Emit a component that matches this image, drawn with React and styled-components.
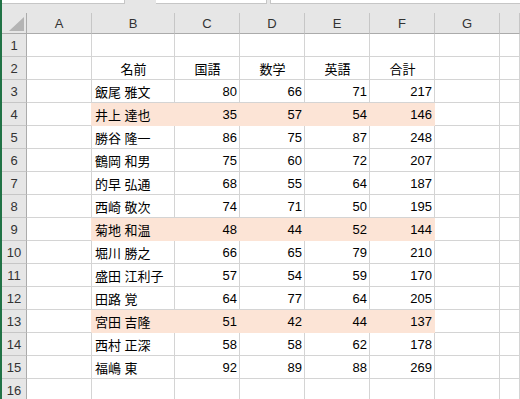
import React from "react";
import styled, { createGlobalStyle } from "styled-components";

const GlobalStyle = createGlobalStyle`
  html, body {
    margin: 0;
    padding: 0;
    width: 520px;
    height: 399px;
    overflow: hidden;
    background: #ffffff;
  }
  body {
    font-family: "Liberation Sans", "Noto Sans CJK JP", sans-serif;
  }
`;

const HILITE = "#fce4d6";
const GRID = "#d4d4d4";

const columns = ["A", "B", "C", "D", "E", "F", "G", ""];

const students = [
  { name: "飯尾 雅文", scores: [80, 66, 71] },
  { name: "井上 達也", scores: [35, 57, 54], mark: true },
  { name: "勝谷 隆一", scores: [86, 75, 87] },
  { name: "鶴岡 和男", scores: [75, 60, 72] },
  { name: "的早 弘通", scores: [68, 55, 64] },
  { name: "西崎 敬次", scores: [74, 71, 50] },
  { name: "菊地 和温", scores: [48, 44, 52], mark: true },
  { name: "堀川 勝之", scores: [66, 65, 79] },
  { name: "盛田 江利子", scores: [57, 54, 59] },
  { name: "田路 覚", scores: [64, 77, 64] },
  { name: "宮田 吉隆", scores: [51, 42, 44], mark: true },
  { name: "西村 正深", scores: [58, 58, 62] },
  { name: "福嶋 東", scores: [92, 89, 88] },
];

const App = () => {
  const rows = [];
  // row 1: empty, row 2: headings, rows 3..15: data, row 16: empty
  rows.push({ cells: ["", "", "", "", "", "", "", ""] });
  rows.push({
    cells: ["", "名前", "国語", "数学", "英語", "合計", "", ""],
    heading: true,
  });
  students.forEach((s) => {
    const total = s.scores.reduce((a, b) => a + b, 0);
    rows.push({
      cells: ["", s.name, ...s.scores, total, "", ""],
      mark: s.mark,
    });
  });
  rows.push({ cells: ["", "", "", "", "", "", "", ""] });

  return (
    <>
      <GlobalStyle />
      <Window>
        <GreenEdge />
        <Main>
          <TopBar>
            <NameBox />
            <BarGap />
            <FormulaTools />
            <FormulaBox />
          </TopBar>
          <Sheet>
            <Corner>
              <svg width="15" height="14" viewBox="0 0 15 14">
                <polygon points="15,0 15,14 0,14" fill="#b4b4b4" />
              </svg>
            </Corner>
            {columns.map((c, i) => (
              <ColHead key={i}>{c}</ColHead>
            ))}
            {rows.map((row, r) => (
              <React.Fragment key={r}>
                <RowHead>{r + 1}</RowHead>
                {row.cells.map((v, c) => {
                  const inBand = row.mark && c >= 1 && c <= 5;
                  const before = row.mark && c === 0;
                  let align = "right";
                  if (c === 1) align = row.heading ? "center" : "left";
                  else if (row.heading) align = "center";
                  return (
                    <Cell key={c} $align={align} $fill={inBand} $leftOfFill={before}>
                      {v}
                    </Cell>
                  );
                })}
              </React.Fragment>
            ))}
          </Sheet>
        </Main>
      </Window>
    </>
  );
};

export default App;

const Window = styled.div`
  display: flex;
  width: 520px;
  height: 399px;
  overflow: hidden;
  background: #e6e6e6;
`;

const GreenEdge = styled.div`
  width: 2px;
  flex: none;
  background: #217346;
`;

const Main = styled.div`
  flex: 1;
  display: flex;
  flex-direction: column;
  min-width: 0;
`;

const TopBar = styled.div`
  display: flex;
  height: 4px;
  margin-bottom: 9px;
  flex: none;
`;

const NameBox = styled.div`
  width: 122px;
  background: #ffffff;
  border-right: 1px solid #c6c6c6;
  border-bottom: 1px solid #c6c6c6;
`;

const BarGap = styled.div`
  width: 31px;
`;

const FormulaTools = styled.div`
  width: 110px;
  background: #ffffff;
  border-right: 1px solid #c6c6c6;
  border-bottom: 1px solid #c6c6c6;
`;

const FormulaBox = styled.div`
  flex: 1;
  margin-left: 3px;
  background: #ffffff;
  border-left: 1px solid #c6c6c6;
  border-bottom: 1px solid #c6c6c6;
`;

const Sheet = styled.div`
  display: grid;
  grid-template-columns: 25px 65px 83px 65px 65px 65px 65px 65px 1fr;
  grid-template-rows: 21px repeat(16, 23px);
  font-size: 13px;
  color: #000000;
`;

const Corner = styled.div`
  display: flex;
  align-items: flex-end;
  justify-content: flex-end;
  padding: 0 2px 2px 0;
  border-right: 1px solid #ababab;
  border-bottom: 1px solid #ababab;
  background: #e6e6e6;
`;

const ColHead = styled.div`
  display: flex;
  align-items: center;
  justify-content: center;
  background: #e6e6e6;
  color: #333333;
  font-size: 13px;
  border-right: 1px solid #c6c6c6;
  border-bottom: 1px solid #ababab;
  padding-top: 1px;
`;

const RowHead = styled.div`
  display: flex;
  align-items: center;
  justify-content: center;
  background: #e6e6e6;
  color: #333333;
  font-size: 13px;
  border-right: 1px solid #ababab;
  border-bottom: 1px solid #c6c6c6;
  padding-top: 1px;
`;

const Cell = styled.div`
  display: flex;
  align-items: center;
  justify-content: ${(p) =>
    p.$align === "left" ? "flex-start" : p.$align === "center" ? "center" : "flex-end"};
  padding: 1px 2px 0 3px;
  white-space: nowrap;
  overflow: hidden;
  background: ${(p) => (p.$fill ? HILITE : "#ffffff")};
  border-right: 1px solid ${(p) => (p.$fill || p.$leftOfFill ? HILITE : GRID)};
  border-bottom: 1px solid ${(p) => (p.$fill ? HILITE : GRID)};
`;
